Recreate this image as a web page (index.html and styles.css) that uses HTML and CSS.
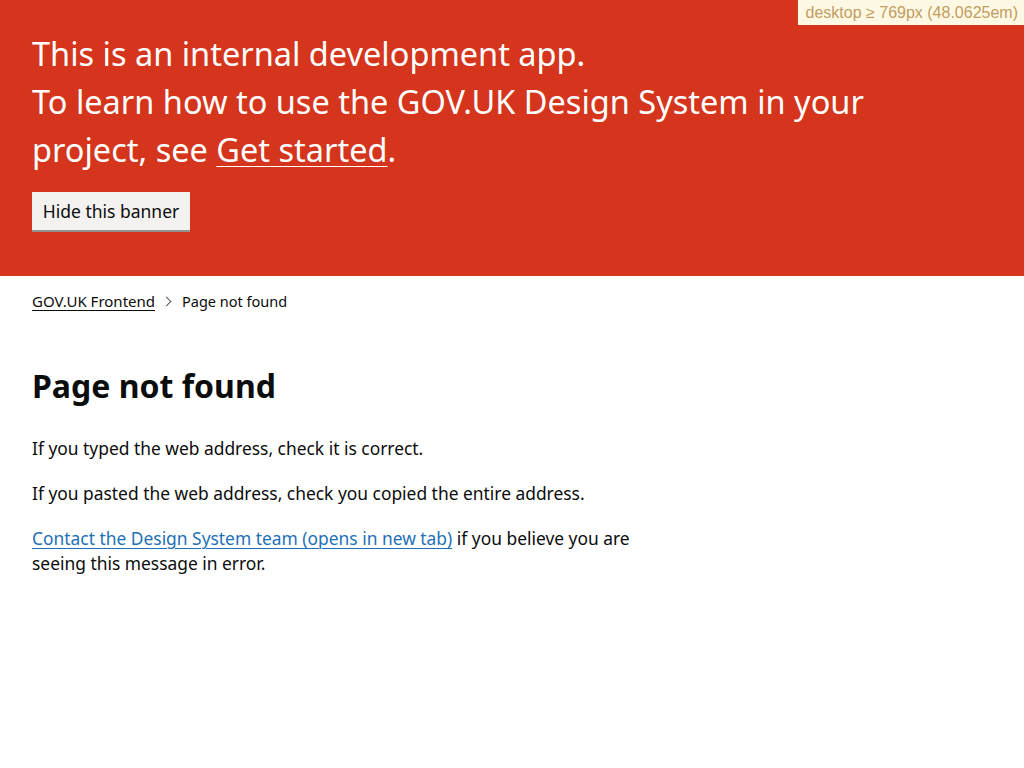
FILE: index.html
```html
<!DOCTYPE html>
<html lang="en">
<head>
<meta charset="utf-8">
<title>Page not found</title>
<link rel="stylesheet" href="styles.css">
</head>
<body>
<div class="mq-debug">desktop ≥ 769px (48.0625em)</div>
<div class="banner">
  <div class="container">
    <p class="banner-text">This is an internal development app.<br>To learn how to use the GOV.UK Design System in your<br>project, see <a href="#" class="banner-link">Get started</a>.</p>
    <button class="banner-button" type="button">Hide this banner</button>
  </div>
</div>
<div class="container">
  <nav class="breadcrumbs">
    <ol class="breadcrumbs-list">
      <li class="breadcrumbs-item"><a href="#" class="breadcrumbs-link">GOV.UK Frontend</a></li>
      <li class="breadcrumbs-item breadcrumbs-item-current"><span class="chevron"></span>Page not found</li>
    </ol>
  </nav>
  <main class="main">
    <div class="two-thirds">
      <h1 class="heading">Page not found</h1>
      <p class="body">If you typed the web address, check it is correct.</p>
      <p class="body">If you pasted the web address, check you copied the entire address.</p>
      <p class="body"><a href="#" class="link">Contact the Design System team (opens in new tab)</a> if you believe you are seeing this message in error.</p>
    </div>
  </main>
</div>
</body>
</html>
```

FILE: styles.css
```css
html, body {
  margin: 0;
  padding: 0;
  background: #ffffff;
  color: #0b0c0c;
  font-family: "Noto Sans", "Liberation Sans", sans-serif;
}

.mq-debug {
  position: fixed;
  top: 0;
  right: 0;
  background: #fcf8e3;
  color: #c29d5f;
  font-family: "Liberation Sans", Arial, sans-serif;
  font-size: 16px;
  line-height: 25px;
  padding: 0 6px 0 8px;
  height: 25px;
}

.container {
  max-width: 960px;
  margin: 0 auto;
}

.banner {
  background: #d4351c;
  color: #ffffff;
  padding: 30px 0 46px;
}

.banner-text {
  margin: 0 0 18px;
  font-size: 32.5px;
  line-height: 48px;
  font-weight: 400;
}

.banner-link {
  color: #ffffff;
  text-decoration: underline;
  text-decoration-thickness: 1px;
  text-underline-offset: 4px;
}

.banner-button {
  display: block;
  margin: 0;
  border: 0;
  border-radius: 0;
  background: #f3f2f1;
  color: #0b0c0c;
  box-shadow: 0 2px 0 #929191;
  font-family: inherit;
  font-size: 17.5px;
  line-height: 25px;
  padding: 7px 0 6px;
  height: 38px;
  width: 158px;
  white-space: nowrap;
  text-align: center;
}

.breadcrumbs {
  padding-top: 15px;
  margin-bottom: 15px;
  font-size: 15px;
  line-height: 20px;
}

.breadcrumbs-list {
  display: flex;
  list-style: none;
  margin: 0;
  padding: 0;
}

.breadcrumbs-item {
  display: flex;
  align-items: center;
}

.breadcrumbs-link {
  color: #0b0c0c;
  text-decoration: underline;
  text-decoration-thickness: 1px;
  text-underline-offset: 3px;
}

.chevron {
  display: inline-block;
  width: 6px;
  height: 6px;
  border-top: 1px solid #505a5f;
  border-right: 1px solid #505a5f;
  transform: rotate(45deg);
  margin: 0 12px 0 8px;
}

.breadcrumbs-item-current {
  font-size: 14.5px;
}

.main {
  padding-top: 40px;
}

.two-thirds {
  width: 630px;
}

.heading {
  margin: 0 0 30px;
  font-size: 32px;
  line-height: 40px;
  font-weight: 700;
}

.body {
  margin: 0 0 20px;
  font-size: 17.4px;
  line-height: 25px;
}

.link {
  color: #1d70b8;
  text-decoration: underline;
  text-decoration-thickness: 1px;
  text-underline-offset: 3px;
}
```
